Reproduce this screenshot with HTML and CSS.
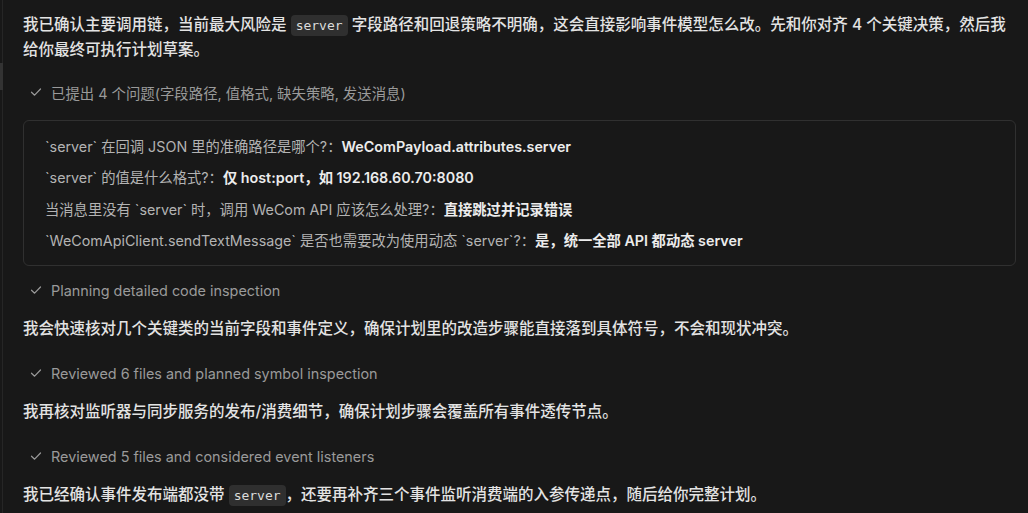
FILE: index.html
```html
<!DOCTYPE html>
<html lang="zh-CN">
  <head>
    <meta charset="UTF-8" />
    <meta name="viewport" content="width=device-width, initial-scale=1.0" />
    <title>对话</title>
    <link rel="stylesheet" href="styles.css">
  </head>
  <body>
    <div class="page">
      <div class="rail">
        <div class="railGap"></div>
        <div class="railThumb"></div>
      </div>
      <div class="thread">
        <p class="para lead">我已确认主要调用链，当前最大风险是 <code>server</code> 字段路径和回退策略不明确，这会直接影响事件模型怎么改。先和你对齐 4 个关键决策，然后我给你最终可执行计划草案。</p>

        <div class="step">
          <svg class="check" viewBox="0 0 12 12"><path d="M1.5 6.2 L4.6 9.2 L10.5 3" /></svg>
          <span>已提出 4 个问题(字段路径, 值格式, 缺失策略, 发送消息)</span>
        </div>

        <div class="qbox">
          <div class="qrow">`server` 在回调 JSON 里的准确路径是哪个?：<b>WeComPayload.attributes.server</b></div>
          <div class="qrow">`server` 的值是什么格式?：<b>仅 host:port，如 192.168.60.70:8080</b></div>
          <div class="qrow">当消息里没有 `server` 时，调用 WeCom API 应该怎么处理?：<b>直接跳过并记录错误</b></div>
          <div class="qrow">`WeComApiClient.sendTextMessage` 是否也需要改为使用动态 `server`?：<b>是，统一全部 API 都动态 server</b></div>
        </div>

        <div class="step">
          <svg class="check" viewBox="0 0 12 12"><path d="M1.5 6.2 L4.6 9.2 L10.5 3" /></svg>
          <span>Planning detailed code inspection</span>
        </div>

        <p class="para">我会快速核对几个关键类的当前字段和事件定义，确保计划里的改造步骤能直接落到具体符号，不会和现状冲突。</p>

        <div class="step">
          <svg class="check" viewBox="0 0 12 12"><path d="M1.5 6.2 L4.6 9.2 L10.5 3" /></svg>
          <span>Reviewed 6 files and planned symbol inspection</span>
        </div>

        <p class="para">我再核对监听器与同步服务的发布/消费细节，确保计划步骤会覆盖所有事件透传节点。</p>

        <div class="step">
          <svg class="check" viewBox="0 0 12 12"><path d="M1.5 6.2 L4.6 9.2 L10.5 3" /></svg>
          <span>Reviewed 5 files and considered event listeners</span>
        </div>

        <p class="para">我已经确认事件发布端都没带 <code>server</code>，还要再补齐三个事件监听消费端的入参传递点，随后给你完整计划。</p>
      </div>
    </div>
  </body>
</html>
```

FILE: styles.css
```css
html,
body,
p,
div {
  margin: 0px;
  padding: 0px;
}
body {
  background-color: #181818;
  color: #e3e3e3;
  font-family: Inter, "Noto Sans CJK SC", sans-serif;
  overflow: hidden;
}
.page {
  display: flex;
  min-height: 513px;
}
.rail {
  display: flex;
  flex-direction: column;
  width: 2px;
  border-right: 1px solid #262626;
}
.railGap {
  height: 63px;
}
.railThumb {
  height: 27px;
  width: 3px;
  background-color: #333;
}
.thread {
  flex: 1;
  padding: 12px 12px 0px 20px;
}
.para {
  font-size: 15.5px;
  line-height: 25px;
  font-weight: 500;
  color: #e3e3e3;
}
code {
  display: inline-block;
  font-family: "DejaVu Sans Mono", "Liberation Mono", monospace;
  font-size: 13px;
  line-height: 21px;
  font-weight: 400;
  background-color: #2f2f2f;
  color: #dcdcdc;
  border-radius: 4px;
  padding: 0px 5px;
}
.step {
  display: flex;
  align-items: center;
  gap: 9px;
  height: 22px;
  padding-left: 7px;
  font-size: 14.4px;
  color: #9a9a9a;
}
.check {
  width: 12px;
  height: 12px;
  fill: none;
  stroke: #9a9a9a;
  stroke-width: 1.2;
  stroke-linecap: round;
  stroke-linejoin: round;
}
.qbox {
  border: 1px solid #303030;
  border-radius: 6px;
  padding: 10px 21px 9px;
}
.qrow {
  font-size: 14.3px;
  line-height: 31.3px;
  color: #b3b3b3;
}
.qrow b {
  color: #ececec;
  font-weight: 600;
}
.para + .step {
  margin-top: 21.5px;
}
.para.lead + .step {
  margin-top: 19px;
}
.step + .para {
  margin-top: 14.5px;
}
.step + .qbox {
  margin-top: 17px;
}
.qbox + .step {
  margin-top: 13px;
}
```
